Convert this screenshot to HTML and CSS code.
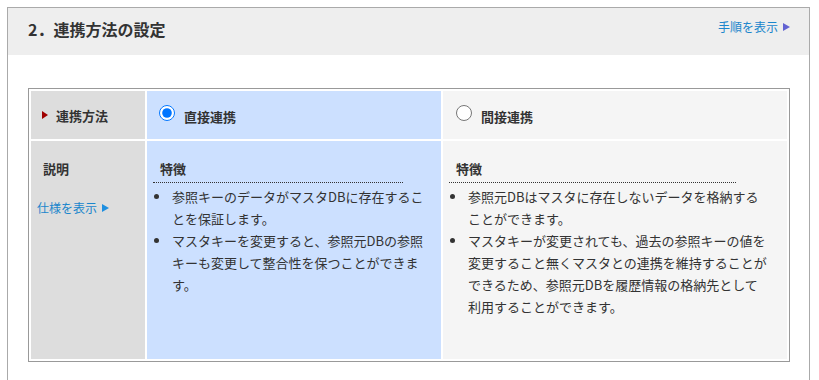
FILE: index.html
```html
<!DOCTYPE html>
<html lang="ja">
<head>
    <meta charset="UTF-8">
    <title>連携方法の設定</title>
    <link rel="stylesheet" href="styles.css">
</head>
<body>
<div class="panel">
    <div class="panel-head">
        <h2 class="panel-title">2．連携方法の設定</h2>
        <a class="link link-head" href="#">手順を表示<span class="arrow arrow-purple"></span></a>
    </div>
    <div class="panel-body">
        <div class="method-grid">
            <div class="cell cell-label">
                <span class="mark"></span>
                <span class="label-text">連携方法</span>
            </div>
            <label class="cell cell-direct cell-choice">
                <input type="radio" name="method" value="direct" checked>
                <span class="choice-text">直接連携</span>
            </label>
            <label class="cell cell-indirect cell-choice">
                <input type="radio" name="method" value="indirect">
                <span class="choice-text">間接連携</span>
            </label>

            <div class="cell cell-label cell-desc">
                <div class="desc-title">説明</div>
                <a class="link link-spec" href="#">仕様を表示<span class="arrow arrow-blue"></span></a>
            </div>
            <div class="cell cell-direct cell-text">
                <div class="feature-head">特徴</div>
                <ul class="feature-list">
                    <li>参照キーのデータがマスタDBに存在することを保証します。</li>
                    <li>マスタキーを変更すると、参照元DBの参照キーも変更して整合性を保つことができます。</li>
                </ul>
            </div>
            <div class="cell cell-indirect cell-text">
                <div class="feature-head">特徴</div>
                <ul class="feature-list">
                    <li>参照元DBはマスタに存在しないデータを格納することができます。</li>
                    <li>マスタキーが変更されても、過去の参照キーの値を変更すること無くマスタとの連携を維持することができるため、参照元DBを履歴情報の格納先として利用することができます。</li>
                </ul>
            </div>
        </div>
    </div>
</div>
</body>
</html>
```

FILE: styles.css
```css
* {
    box-sizing: border-box;
}
html, body {
    margin: 0;
    padding: 0;
}
body {
    background-color: #ffffff;
    font-family: "Noto Sans CJK JP", "Noto Sans", sans-serif;
    font-size: 13px;
    color: #333333;
}

.panel {
    margin: 7px 9px 0 7px;
    border: 1px solid #aaaaaa;
    border-bottom: none;
    height: 373px;
}
.panel-head {
    height: 47px;
    background-color: #eeeeee;
    display: flex;
    justify-content: space-between;
    align-items: flex-start;
    padding: 9px 19px 0 20px;
}
.panel-title {
    margin: 0;
    font-size: 16px;
    line-height: 24px;
    font-weight: bold;
    color: #333333;
}
.link {
    color: #1a86cc;
    text-decoration: none;
    font-size: 12px;
    line-height: 20px;
    display: inline-flex;
    align-items: center;
}
.arrow {
    display: inline-block;
    width: 0;
    height: 0;
    border-top: 4px solid transparent;
    border-bottom: 4px solid transparent;
    border-left: 7px solid #1e8fe0;
    margin-left: 5px;
}
.arrow-purple {
    border-left-color: #6262d2;
}

.panel-body {
    padding: 33px 19px 0 20px;
}
.method-grid {
    display: grid;
    grid-template-columns: 114px 294px 1fr;
    grid-template-rows: 48px 218px;
    gap: 2px;
    padding: 2px;
    border: 1px solid #999999;
}
.cell-label {
    background-color: #dddddd;
    font-weight: bold;
    color: #333333;
}
.cell-direct {
    background-color: #cce0ff;
}
.cell-indirect {
    background-color: #f5f5f5;
}

.cell-label:first-child {
    display: flex;
    align-items: center;
    padding-left: 11px;
}
.mark {
    width: 0;
    height: 0;
    border-top: 4.5px solid transparent;
    border-bottom: 4.5px solid transparent;
    border-left: 6px solid #a00000;
    margin-right: 8px;
}

.cell-choice {
    display: flex;
    align-items: center;
    padding-left: 12px;
    cursor: pointer;
}
.cell-indirect.cell-choice {
    padding-left: 13px;
}
.cell-choice input {
    width: 16px;
    height: 16px;
    margin: 0 9px 4px 0;
}
.choice-text {
    font-weight: bold;
    padding-top: 2px;
}

.cell-desc {
    padding: 18px 6px 0 6px;
}
.desc-title {
    line-height: 20px;
    padding-left: 6px;
}
.link-spec {
    margin-top: 19px;
    font-weight: normal;
}

.cell-text {
    padding: 18px 10px 0 6px;
}
.cell-indirect.cell-text {
    padding-right: 19px;
}
.feature-head {
    width: 90%;
    font-weight: bold;
    line-height: 20px;
    padding: 0 0 3px 7px;
    border-bottom: 1px dotted #333333;
}
.feature-list {
    margin: 3px 0 0 0;
    padding-left: 18px;
    line-height: 22px;
}
.feature-list li {
    padding-left: 1px;
}
```
